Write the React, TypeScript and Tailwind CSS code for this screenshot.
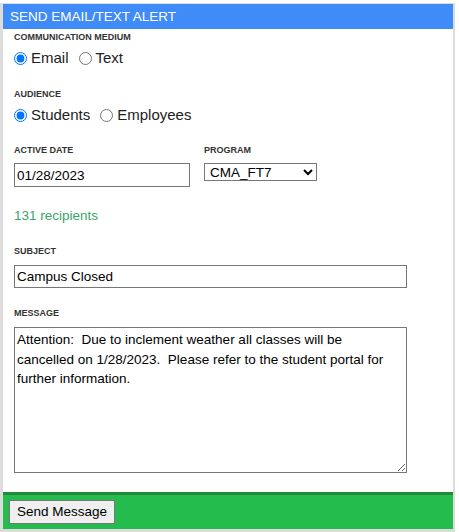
import React from "react";

function Label({ children, className = "" }: { children: React.ReactNode; className?: string }) {
  return (
    <div className={`text-[9px] leading-[11px] h-[11px] font-bold text-[#333333] ${className}`}>
      {children}
    </div>
  );
}

function Radio({ name, label, checked }: { name: string; label: string; checked?: boolean }) {
  return (
    <label className="flex items-center mr-[10px]">
      <input
        type="radio"
        name={name}
        defaultChecked={checked}
        className="w-[13px] h-[13px] m-0 mr-[4px]"
      />
      <span className="text-[15px] leading-[20px] text-[#222222]">{label}</span>
    </label>
  );
}

export default function App() {
  return (
    <div className="bg-white w-[459px] h-[532px] pt-[3px]" style={{ fontFamily: '"Liberation Sans", Arial, sans-serif' }}>
      <div className="w-[455px] h-[529px] border-l-[3px] border-t border-r-2 border-b-[3px] border-[#dcdcdc] flex flex-col">
        <div className="h-[25px] bg-[#3f8bf8] text-white text-[13.5px] leading-[25px] pl-[7px]">
          SEND EMAIL/TEXT ALERT
        </div>
        <div className="flex-1 px-[11px] flex flex-col">
          <Label className="mt-[3px]">COMMUNICATION MEDIUM</Label>
          <div className="flex items-center h-[20px] mt-[5px]">
            <Radio name="medium" label="Email" checked />
            <Radio name="medium" label="Text" />
          </div>
          <Label className="mt-[21px]">AUDIENCE</Label>
          <div className="flex items-center h-[20px] mt-[5px]">
            <Radio name="aud" label="Students" checked />
            <Radio name="aud" label="Employees" />
          </div>
          <div className="flex mt-[20px]">
            <div className="w-[190px]">
              <Label>ACTIVE DATE</Label>
              <input
                type="text"
                defaultValue="01/28/2023"
                className="mt-[7px] w-[176px] h-[24px] border border-[#767676] pl-[2px] text-[13.5px] text-black bg-white outline-none"
              />
            </div>
            <div>
              <Label>PROGRAM</Label>
              <select
                defaultValue="CMA_FT7"
                className="mt-[7px] w-[113px] h-[18px] border border-[#767676] text-[13.5px] leading-[16px] py-0 text-black bg-white pl-[1px] outline-none"
              >
                <option value="CMA_FT7">CMA_FT7</option>
              </select>
            </div>
          </div>
          <div className="mt-[21px] h-[16px] text-[13.5px] leading-[16px] text-[#3ba56a]">131 recipients</div>
          <Label className="mt-[22px]">SUBJECT</Label>
          <input
            type="text"
            defaultValue="Campus Closed"
            className="mt-[8px] w-[393px] h-[23px] border border-[#767676] pl-[2px] text-[13.5px] text-black bg-white outline-none"
          />
          <Label className="mt-[20px]">MESSAGE</Label>
          <textarea
            defaultValue={"Attention:  Due to inclement weather all classes will be cancelled on 1/28/2023.  Please refer to the student portal for further information."}
            className="mt-[8px] w-[393px] h-[146px] border border-[#767676] pl-[2px] pr-[10px] pt-[2px] text-[13.5px] leading-[19.5px] text-black bg-white outline-none"
          />
        </div>
        <div className="border-t-[3px] border-[#1f8b3b] bg-[#24bc4d] h-[37px] pl-[6px] pt-[4px]">
          <button className="h-[24px] w-[106px] border border-[#767676] bg-[#efefef] text-[13.5px] text-black">
            Send Message
          </button>
        </div>
      </div>
    </div>
  );
}
